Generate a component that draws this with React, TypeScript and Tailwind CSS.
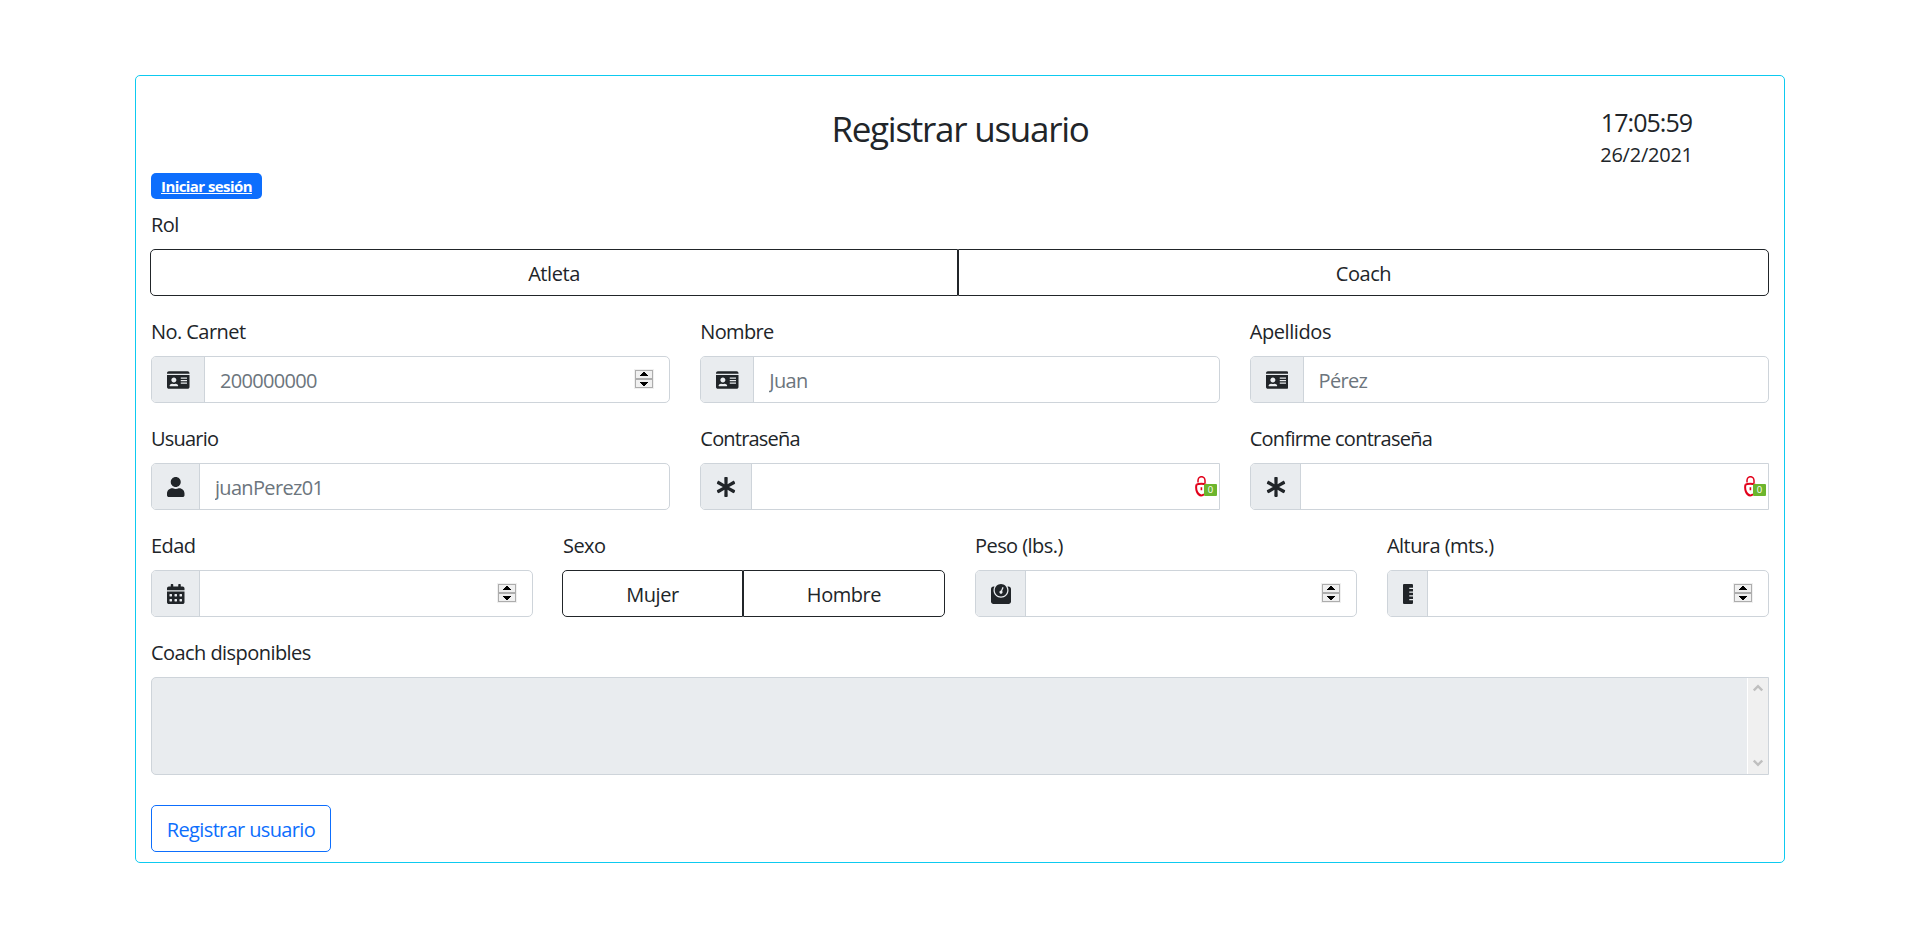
import type { ReactNode } from "react";
import { FaAsterisk, FaCalendarAlt, FaIdCard, FaRulerVertical, FaUser, FaWeight } from "react-icons/fa";

function Spinner() {
  return (
    <svg width="20" height="20" viewBox="0 0 20 20" className="mr-[15px] mb-[2px] shrink-0" shapeRendering="crispEdges">
      <rect width="20" height="20" fill="#f0f0f0" />
      <rect x="1.5" y="1.5" width="17" height="8" fill="#f0f0f0" stroke="#adadad" />
      <rect x="1.5" y="10.5" width="17" height="8" fill="#f0f0f0" stroke="#adadad" />
      <path d="M9 3h2v1h1v1h1v1h1v1H6V6h1V5h1V4h1z" fill="#000" />
      <path d="M6 13h8v1h-1v1h-1v1h-1v1H9v-1H8v-1H7v-1H6z" fill="#000" />
    </svg>
  );
}

function LockBadge() {
  return (
    <svg width="23" height="21" viewBox="0 0 23 21" className="mr-px shrink-0">
      <path d="M3 6.500V4.400a3.400 3.600 0 0 1 7 0V7" fill="none" stroke="#e2001a" strokeWidth="1.500" />
      <path d="M1.500 8.600c2-1 7.500-1 9.500 0M1.500 8.500c-1.200 5 .9 10.700 4.700 10.900 1.300 0 2.100-.5 2.800-1.300" fill="none" stroke="#e2001a" strokeWidth="2" />
      <path d="M6.400 11.200v3" stroke="#e2001a" strokeWidth="1.600" />
      <rect x="9" y="8" width="13" height="12" rx="1" fill="#6cb52d" />
      <text x="15.5" y="17" textAnchor="middle" fontSize="9.500" fill="#fff" fontFamily="Open Sans, sans-serif">0</text>
    </svg>
  );
}

type FieldProps = {
  label: string;
  labelClass?: string;
  icon: ReactNode;
  placeholder?: string;
  trailing?: ReactNode;
  square?: boolean;
};

function Field({ label, labelClass, icon, placeholder, trailing, square }: FieldProps) {
  return (
    <div className="min-w-0">
      <Label className={labelClass}>{label}</Label>
      <div
        className={`flex h-[47px] items-stretch overflow-hidden border border-[#ced4da] ${square ? "rounded-l-[5px]" : "rounded-[5px]"}`}
      >
        <span className="flex shrink-0 items-center border-r border-[#ced4da] bg-[#e9ecef] pr-[14.4px] pl-[15px]">{icon}</span>
        <div className="flex min-w-0 flex-1 items-center">
          <input
            placeholder={placeholder}
            className="min-w-0 flex-1 px-[15px] pt-[2px] text-[20px] tracking-[-0.033em] outline-none placeholder:text-[#6c757d]"
          />
          {trailing}
        </div>
      </div>
    </div>
  );
}

function Label({ children, className = "tracking-[-0.028em]" }: { children: ReactNode; className?: string }) {
  return <div className={`mb-[10px] h-[30px] pt-px leading-[30px] ${className}`}>{children}</div>;
}

function ButtonPair({ left, right, leftClass }: { left: string; right: string; leftClass: string }) {
  return (
    <div className="-ml-px flex h-[47px]">
      <button className={`rounded-l-[5px] border border-[#212529] pt-[2px] tracking-[-0.022em] ${leftClass}`}>{left}</button>
      <button className="flex-1 rounded-r-[5px] border border-[#212529] pt-[2px] tracking-[-0.022em]">{right}</button>
    </div>
  );
}

const idCard = <FaIdCard className="h-[20px] w-[22.5px]" />;
const asterisk = <FaAsterisk className="h-[20px] w-[20px]" />;

export default function App() {
  return (
    <div className="min-h-[938px] bg-white pt-[75px] font-['Open_Sans','Noto_Sans',sans-serif] text-[20px] leading-[30px] text-[#212529]">
      <main className="mx-auto h-[788px] w-[1650px] rounded-[5px] border border-[#0dcaf0] px-[15px]">
        <header className="grid h-[97px] grid-cols-[1fr_540px_1fr]">
          <div />
          <h1 className="pt-[32px] text-center text-[35px] leading-[42px] tracking-[-0.036em]">Registrar usuario</h1>
          <div className="flex flex-col items-center pt-[31px] pl-[294px]">
            <div className="text-[25px] leading-[30px] tracking-[-0.038em]">17:05:59</div>
            <div className="mt-[3px] tracking-[-0.012em]">26/2/2021</div>
          </div>
        </header>
        <div className="flex h-[36px] items-start">
          <a
            href="#"
            className="h-[26px] rounded-[5px] bg-[#0d6efd] px-[10px] text-[15px] leading-[26px] font-bold tracking-[-0.038em] text-white underline"
          >
            Iniciar sesión
          </a>
        </div>
        <form className="flex flex-col gap-[20px]">
          <div>
            <Label>Rol</Label>
            <ButtonPair left="Atleta" right="Coach" leftClass="w-[808px]" />
          </div>
          <div className="grid grid-cols-3 gap-x-[30px] gap-y-[20px]">
            <Field label="No. Carnet" icon={idCard} placeholder="200000000" trailing={<Spinner />} />
            <Field label="Nombre" labelClass="tracking-[-0.034em]" icon={idCard} placeholder="Juan" />
            <Field label="Apellidos" labelClass="tracking-[-0.02em]" icon={idCard} placeholder="Pérez" />
            <Field label="Usuario" labelClass="tracking-[-0.04em]" icon={<FaUser className="h-[20px] w-[17.5px]" />} placeholder="juanPerez01" />
            <Field label="Contraseña" labelClass="tracking-[-0.04em]" icon={asterisk} trailing={<LockBadge />} square />
            <Field label="Confirme contraseña" labelClass="tracking-[-0.036em]" icon={asterisk} trailing={<LockBadge />} square />
          </div>
          <div className="grid grid-cols-4 gap-[30px]">
            <Field label="Edad" icon={<FaCalendarAlt className="h-[20px] w-[17.5px]" />} trailing={<Spinner />} />
            <div>
              <Label>Sexo</Label>
              <ButtonPair left="Mujer" right="Hombre" leftClass="w-[181px]" />
            </div>
            <Field label="Peso (lbs.)" icon={<FaWeight className="h-[20px] w-[20px]" />} trailing={<Spinner />} />
            <Field label="Altura (mts.)" icon={<FaRulerVertical className="h-[20px] w-[10px]" />} trailing={<Spinner />} />
          </div>
          <div>
            <Label>Coach disponibles</Label>
            <div className="flex h-[98px] justify-end rounded-l-[5px] border border-[#ced4da] bg-[#e9ecef]">
              <div className="flex w-[21px] flex-col items-center justify-between border-l border-white bg-[#f0f0f0] pt-[6px] pb-[7px]">
                <svg width="10" height="8" viewBox="0 0 10 8">
                  <path d="M.8 6.500 5 2.200l4.200 4.300" fill="none" stroke="#bfbfbf" strokeWidth="2.400" />
                </svg>
                <svg width="10" height="8" viewBox="0 0 10 8">
                  <path d="M.8 1.500 5 5.800l4.200-4.300" fill="none" stroke="#bfbfbf" strokeWidth="2.400" />
                </svg>
              </div>
            </div>
          </div>
          <button
            type="button"
            className="mt-[10px] h-[47px] w-[180px] rounded-[5px] border border-[#0d6efd] pt-[2px] tracking-[-0.032em] whitespace-nowrap text-[#0d6efd]"
          >
            Registrar usuario
          </button>
        </form>
      </main>
    </div>
  );
}
